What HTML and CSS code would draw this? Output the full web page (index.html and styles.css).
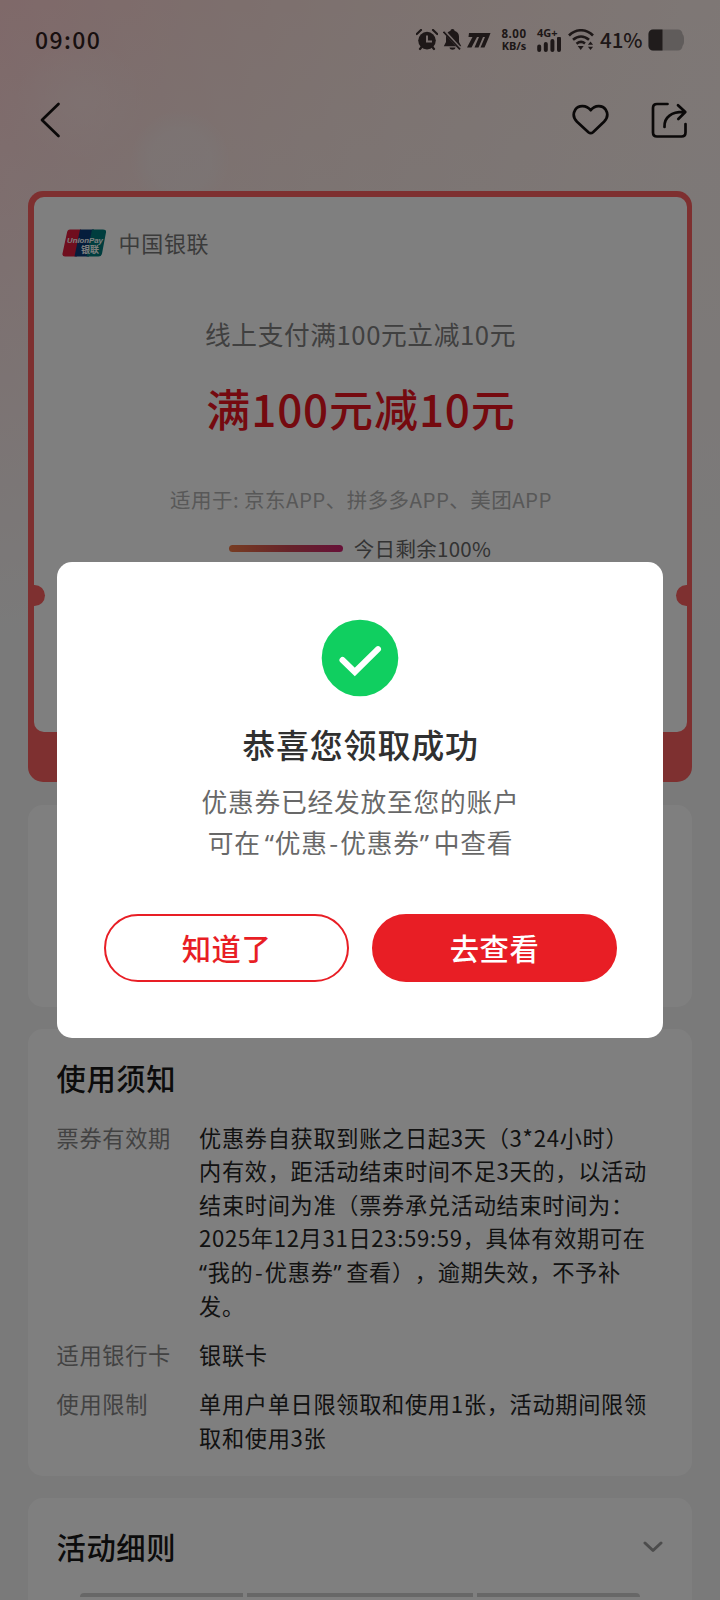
FILE: index.html
```html
<!DOCTYPE html>
<html lang="zh-CN">
<head>
<meta charset="utf-8">
<title>优惠券</title>
<link rel="stylesheet" href="styles.css">
</head>
<body>
<div class="page">
  <header class="status">
    <span class="time">09:00</span>
    <svg class="alarm" width="22" height="22" viewBox="0 0 22 22"><circle cx="11" cy="11.6" r="8.8" fill="currentColor"/><path d="M.8 5 5 1M21.200 5 17 1M4 20l2-2.500M18 20l-2-2.500" stroke="currentColor" stroke-width="2.200" stroke-linecap="round"/><path d="M11 6.500v6h5" fill="none" stroke="#f0dcda" stroke-width="2"/></svg>
    <svg class="bell" width="19" height="22" viewBox="0 0 19 22"><path d="M9.500 0c1.200 0 2 .8 2 1.800 3 .9 4.500 3.200 4.500 6V13l2.300 4.300H.8L3 13V7.800c0-2.800 1.500-5.100 4.500-6 0-1 .8-1.800 2-1.800zM6.500 18.500h6c-.4 3-5.600 3-6 0z" fill="currentColor"/><path d="M1.500 2.500 17.500 20" stroke="#f0dedc" stroke-width="3.200"/><path d="M.5 2.800 17 20.300" stroke="currentColor" stroke-width="1.700"/></svg>
    <svg class="trio" width="24" height="15" viewBox="0 0 24 15"><path d="M2 0h21.500L22 4 17.500 14.500h-4L18 4h-2L11.500 14.500h-4L12 4h-2L4.500 14.500H0L5.500 4H1.500z" fill="currentColor"/></svg>
    <span class="speed"><span class="rate">8.00</span><span>KB/s</span></span>
    <span class="cell"><span>4G+</span><svg width="25" height="15" viewBox="0 0 25 15"><path d="M2.200 9.500V13M8.800 7v6M15.400 4v9M22 1.500V13" stroke="currentColor" stroke-width="4" stroke-linecap="round"/></svg></span>
    <svg class="wifi" width="27" height="22" viewBox="0 0 27 22"><path d="M1 6.500C8-.5 18-.5 25 6.500M5 10.800c5-4.300 11-4.300 16 0M8.500 14.700c3-2.300 6-2.300 8.500-.2" fill="none" stroke="currentColor" stroke-width="2.600"/><path d="M9.700 17h6L12.700 21z" fill="currentColor"/><path d="m22.500 12.500 2.600 3.300h-5.200zM22.500 21l2.600-3.300h-5.200z" fill="currentColor"/></svg>
    <span class="percent">41%</span>
    <svg class="battery" width="37" height="22" viewBox="0 0 37 22"><path d="M5 .5h25a4.500 4.500 0 0 1 4.500 4.500q1.500 1.500 1.500 4v4q0 2.500-1.500 4a4.500 4.500 0 0 1-4.500 4.500H5a4.500 4.500 0 0 1-4.500-4.500V5A4.500 4.500 0 0 1 5 .5z" fill="#c0b8b6"/><path d="M14.500.5H5A4.500 4.500 0 0 0 .5 5v12A4.500 4.500 0 0 0 5 21.500h9.500z" fill="#403838"/></svg>
  </header>
  <nav class="nav">
    <svg class="back" width="21" height="36" viewBox="0 0 21 36"><path d="M18.500 2 2 18 18.500 34" fill="none" stroke="currentColor" stroke-width="2.700" stroke-linecap="round" stroke-linejoin="round"/></svg>
    <svg class="heart" width="38" height="32" viewBox="0 0 38 32"><path d="M18.700 6.200C14.500 1 6.500.8 3.400 5.500.8 9.700 1.500 14.200 5 17.700L16.400 28.200q2.300 2 4.600 0L32 17.700c3.500-3.500 4.200-8 1.600-12.200C30.500.8 22.800 1 18.700 6.200z" fill="none" stroke="currentColor" stroke-width="2.700" stroke-linejoin="round"/></svg>
    <svg class="share" width="38" height="37" viewBox="0 0 38 37"><g fill="none" stroke="currentColor" stroke-width="2.700" stroke-linecap="round" stroke-linejoin="round"><path d="M16.500 2H6Q2 2 2 6v24.500Q2 34.500 6 34.500h24.500q4 0 4-4V22"/><path d="M13.500 25C13 15 20.500 9.500 34 10M27 3.200 34.300 10l-7 7"/></g></svg>
  </nav>

  <section class="coupon">
    <div class="ticket">
      <div class="brand">
        <svg width="45" height="28" viewBox="0 0 45 28"><path d="M8 .5h11L15 27.500H3q-3 0-2.500-3L5 3.500Q5.500.5 8 .5z" fill="#e01c3c"/><path d="M18 .5h14L27 27.500H12.500z" fill="#0a3a78"/><path d="M30 .5h11q3.500 0 3 3l-4 21q-.6 3-3.500 3h-12z" fill="#007a7c"/><text class="brand-en" x="5" y="14">UnionPay</text><text class="brand-cn" x="19" y="24">银联</text></svg>
        <span>中国银联</span>
      </div>
      <p class="summary">线上支付满100元立减10元</p>
      <p class="amount">满100元减10元</p>
      <p class="scope">适用于: 京东APP、拼多多APP、美团APP</p>
      <div class="remain"><i class="meter"></i><span>今日剩余100%</span></div>
      <i class="notch notch-left"></i><i class="notch notch-right"></i>
    </div>
  </section>

  <section class="card blank"></section>

  <section class="card notice">
    <h2>使用须知</h2>
    <dl>
      <dt>票券有效期</dt>
      <dd>优惠券自获取到账之日起3天（3*24小时）<br>内有效，距活动结束时间不足3天的，以活动<br>结束时间为准（票券承兑活动结束时间为：<br><span class="tight">2025年12月31日23:59:59，</span>具体有效期可在<br><span class="q">“</span>我的<span class="dash">-</span>优惠券<span class="q q-end">”</span>查看），逾期失效，不予补<br>发。</dd>
      <dt>适用银行卡</dt>
      <dd>银联卡</dd>
      <dt>使用限制</dt>
      <dd>单用户单日限领取和使用1张，活动期间限领<br>取和使用3张</dd>
    </dl>
  </section>

  <section class="card rules">
    <div class="rules-head"><h2>活动细则</h2><svg width="20" height="12" viewBox="0 0 20 12"><path d="m2 2 8 7.500L18 2" fill="none" stroke="#989898" stroke-width="3" stroke-linecap="round" stroke-linejoin="round"/></svg></div>
    <div class="table-head"><i></i><i></i><i></i></div>
  </section>
</div>

<div class="mask">
  <div class="dialog">
    <svg class="ok" width="78" height="78" viewBox="0 0 78 78"><circle cx="39" cy="39" r="38.300" fill="#10cf60"/><path d="m21.500 41 12.300 12L57 30.200" fill="none" stroke="#fff" stroke-width="6" stroke-linecap="round"/></svg>
    <h1>恭喜您领取成功</h1>
    <p>优惠券已经发放至您的账户<br>可在<span class="q q-start">“</span>优惠<span class="dash">-</span>优惠券<span class="q q-end">”</span>中查看</p>
    <div class="actions"><button class="ghost">知道了</button><button class="solid">去查看</button></div>
  </div>
</div>
</body>
</html>
```
FILE: styles.css
```css
* { box-sizing: border-box; margin: 0; padding: 0; }
body {
  width: 720px; height: 1600px; overflow: hidden; position: relative;
  font-family: "Noto Sans CJK SC", "Noto Sans", sans-serif;
  text-spacing-trim: space-all;
  color: #1a1a1a;
}
svg { display: block; flex: none; }
.page {
  height: 1600px; overflow: hidden; display: flex; flex-direction: column;
  background:
    radial-gradient(ellipse 65px 60px at 80px 100px, rgba(255,242,240,.3), transparent),
    radial-gradient(circle 50px at 180px 160px, rgba(242,248,250,.25) 60%, transparent),
    linear-gradient(180deg, rgba(245,245,245,0) 0, rgba(245,245,245,.25) 200px, rgba(245,245,245,.55) 400px, #f5f5f5 640px),
    linear-gradient(105deg, #ffd2d3 0, #fbdcd9 180px, #fbe4df 350px, #fdf0ec 720px);
}
.status { height: 80px; flex: none; display: flex; align-items: center; padding-left: 35px; color: #3c3030; }
.time { width: 381px; margin-top: -2px; font: 500 23px/30px "Noto Sans CJK SC", sans-serif; letter-spacing: 1.400px; color: #30201e; }
.bell { margin-left: 5px; }
.trio { margin-left: 5px; }
.speed { display: flex; flex-direction: column; align-items: center; width: 28px; margin-left: 9px; font: 700 11px/12px "Noto Sans", sans-serif; white-space: nowrap; }
.rate { font-size: 11.500px; letter-spacing: .5px; }
.cell { width: 25px; margin-left: 9px; display: flex; flex-direction: column; font: 700 11px/9px "Noto Sans", sans-serif; }
.wifi { margin-left: 6px; }
.percent { width: 42px; margin: -2px 0 0 5px; font: 500 20.500px/30px "Noto Sans CJK SC", sans-serif; white-space: nowrap; }
.battery { margin-left: 6px; }
.nav { height: 80px; flex: none; display: flex; align-items: center; padding-left: 40px; color: #141010; }
.heart { margin-left: 511px; }
.share { margin-left: 41px; }

.coupon { flex: none; width: 664px; height: 591px; margin: 31px 0 0 28px; padding: 5.500px 5.500px 50px; border-radius: 15px; background: #fc6060; }
.ticket { position: relative; overflow: hidden; height: 535.500px; border-radius: 10px; background: #fff; display: flex; flex-direction: column; align-items: center; white-space: nowrap; }
.brand { align-self: flex-start; display: flex; align-items: center; gap: 12px; height: 34px; margin: 29px 0 0 28px; font-size: 22px; letter-spacing: .7px; color: #777; }
.brand span { margin-top: -2px; }
.brand svg { letter-spacing: 0; overflow: visible; }
.brand text { fill: #fff; }
.brand-en { font: italic 700 7.800px "Liberation Sans", sans-serif; }
.brand-cn { font-size: 9px; font-weight: 700; }
.summary { margin-top: 54px; font-size: 25.700px; letter-spacing: .6px; line-height: 40px; padding-left: 1px; color: #808080; }
.amount { margin-top: 22px; font-size: 44px; letter-spacing: .9px; font-weight: 500; line-height: 64px; padding-left: 2px; color: #ea141f; }
.scope { margin-top: 42px; font-size: 20.500px; letter-spacing: .45px; line-height: 34px; padding-left: 2px; color: #b0b0b0; }
.remain { display: flex; align-items: center; gap: 11px; height: 30px; margin-top: 17px; font-size: 20.500px; letter-spacing: .3px; color: #666; }
.meter { width: 114px; height: 7px; margin-top: 1px; border-radius: 4px; background: linear-gradient(90deg, #ee7844, #cc4454 55%, #ce2270); }
.notch { position: absolute; top: 388px; width: 21px; height: 21px; border-radius: 50%; background: #fc6060; }
.notch-left { left: -10px; }
.notch-right { right: -10px; }

.card { flex: none; width: 664px; margin: 22.500px 0 0 28px; border-radius: 15px; background: #fff; }
.blank { height: 202px; }
.notice { height: 447px; margin-top: 22.500px; padding: 27px 28px 0 28.500px; }
h2 { font-size: 29.300px; letter-spacing: .6px; font-weight: 500; line-height: 42px; color: #181818; }
.notice dl { display: grid; grid-template-columns: 142.500px 1fr; row-gap: 15.500px; margin-top: 22.800px; font-size: 22.200px; letter-spacing: .7px; line-height: 33.500px; white-space: nowrap; }
dt { color: #858585; }
dd { color: #242424; }
.q { font-family: "Noto Sans", sans-serif; }
.q-start { margin-left: 4px; }
.q-end { margin-right: 4px; }
.tight { letter-spacing: .65px; }
.dash { margin: 0 1.500px; }
.rules { height: 120px; margin-top: 22px; padding: 27px 29px 0 28.500px; }
.rules-head { display: flex; align-items: center; justify-content: space-between; }
.rules-head svg { margin-top: 2px; }
.table-head { width: 560px; height: 7px; margin: 26px 0 0 23.500px; display: grid; grid-template-columns: 163px 226px 163px; gap: 4px; }
.table-head i { height: 4px; background: #cfcfcf; }
.table-head i:first-child { border-radius: 4px 0 0 0; }
.table-head i:last-child { border-radius: 0 4px 0 0; }

.mask { position: absolute; inset: 0; background: rgba(0,0,0,.5); display: flex; align-items: center; justify-content: center; }
.dialog { width: 605.500px; height: 476px; border-radius: 15px; background: #fff; display: flex; flex-direction: column; align-items: center; padding-top: 57px; white-space: nowrap; }
h1 { margin-top: 23px; font-size: 33px; letter-spacing: .8px; padding-left: 1px; font-weight: 500; line-height: 48px; color: #303030; }
.dialog p { margin-top: 13px; font-size: 25.700px; letter-spacing: .8px; padding-left: 1px; line-height: 40.600px; text-align: center; color: #686868; }
.actions { display: flex; gap: 23px; margin-top: 50px; padding-left: 1px; }
button { width: 245px; height: 68px; border-radius: 34px; border: 2px solid #e81e25; font: 500 29.300px/60px "Noto Sans CJK SC", sans-serif; letter-spacing: .6px; padding-bottom: 3px; }
.ghost { background: #fff; color: #e81e25; }
.solid { background: #e81e25; color: #fff; }
```
